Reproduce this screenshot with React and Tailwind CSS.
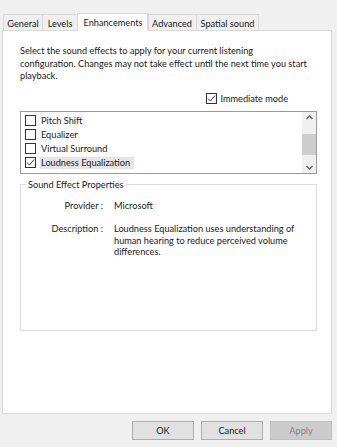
import React from "react";

const tabs = [
  { label: "General", w: "w-[40px]" },
  { label: "Levels", w: "w-[36px]" },
  { label: "Enhancements", w: "w-[72px]", active: true },
  { label: "Advanced", w: "w-[50px]" },
  { label: "Spatial sound", w: "w-[63px]" },
];

const effects = [
  { label: "Pitch Shift" },
  { label: "Equalizer" },
  { label: "Virtual Surround" },
  { label: "Loudness Equalization", checked: true, selected: true },
];

function Check({ checked }) {
  return (
    <span className="w-[11px] h-[11px] border border-[#333] bg-white flex items-center justify-center shrink-0">
      {checked && (
        <svg width="9" height="9" viewBox="0 0 9 9">
          <polyline points="1,4.5 3.5,7 8,1.5" fill="none" stroke="#333" strokeWidth="1" />
        </svg>
      )}
    </span>
  );
}

export default function App() {
  return (
    <div className="w-[337px] h-[447px] bg-[#f0f0f0] flex flex-col font-['Lato',sans-serif] text-[9.2px] text-[#1a1a1a] overflow-hidden">
      {/* tab strip */}
      <div className="flex items-end pl-[3px] pt-[13px] h-[31px] relative z-10">
        {tabs.map((t) =>
          t.active ? (
            <div
              key={t.label}
              className={`${t.w} h-[18px] -mx-[1px] bg-white border border-b-0 border-[#d9d9d9] flex items-start justify-center pt-[2px]`}
            >
              {t.label}
            </div>
          ) : (
            <div
              key={t.label}
              className={`${t.w} h-[16px] mb-[1px] border border-b-0 border-[#d9d9d9] -ml-[1px] first:ml-0 flex items-center justify-center pt-[2px]`}
            >
              {t.label}
            </div>
          )
        )}
      </div>

      {/* page */}
      <div className="ml-[2px] w-[330px] h-[384px] -mt-[1px] bg-white border border-[#d9d9d9] pl-[17px] pr-[14px] pt-[14px]">
        <p className="leading-[12.5px] -mr-[8px] whitespace-nowrap">
          Select the sound effects to apply for your current listening
          <br />
          configuration. Changes may not take effect until the next time you start
          <br />
          playback.
        </p>

        <div className="flex justify-end items-center gap-[3px] mt-[10px] pr-[29px] h-[12px]">
          <Check checked />
          <span>Immediate mode</span>
        </div>

        {/* effects list */}
        <div className="mt-[6px] h-[63px] border border-[#9a9a9a] flex">
          <div className="flex-1 pl-[4px] pt-[2px]">
            {effects.map((e) => (
              <div key={e.label} className="h-[14px] flex items-center gap-[4px]">
                <Check checked={e.checked} />
                <span className={`px-[1px] leading-[12px] ${e.selected ? "bg-[#e5e5e5] pr-[4px]" : ""}`}>{e.label}</span>
              </div>
            ))}
          </div>
          <div className="w-[14px] bg-[#f0f0f0] flex flex-col items-center justify-between py-[3px]">
            <svg width="7" height="5" viewBox="0 0 7 5">
              <polyline points="0.5,4 3.5,1 6.5,4" fill="none" stroke="#606060" strokeWidth="1.3" />
            </svg>
            <div className="w-[14px] h-[21px] bg-[#cdcdcd] mt-[6px]" />
            <svg width="7" height="5" viewBox="0 0 7 5" className="mt-[2px]">
              <polyline points="0.5,1 3.5,4 6.5,1" fill="none" stroke="#606060" strokeWidth="1.3" />
            </svg>
          </div>
        </div>

        {/* properties group */}
        <fieldset className="mt-[5px] h-[152px] border border-[#dcdcdc]">
          <legend className="ml-[5px] px-[2px] leading-[12px]">Sound Effect Properties</legend>
          <div className="grid grid-cols-[82px_1fr] gap-x-[11px] gap-y-[12px] mt-[9px] leading-[11.5px]">
            <span className="text-right">Provider :</span>
            <span>Microsoft</span>
            <span className="text-right">Description :</span>
            <span className="w-[190px]">
              Loudness Equalization uses understanding of human hearing to reduce perceived volume differences.
            </span>
          </div>
        </fieldset>
      </div>

      {/* buttons */}
      <div className="flex justify-end gap-[7px] pr-[5px] mt-[7px]">
        <button className="w-[62px] h-[19px] bg-[#e1e1e1] border border-[#adadad] text-[9.2px]">OK</button>
        <button className="w-[62px] h-[19px] bg-[#e1e1e1] border border-[#adadad] text-[9.2px]">Cancel</button>
        <button className="w-[62px] h-[19px] bg-[#cccccc] border border-[#bfbfbf] text-[#838383] text-[9.2px]">Apply</button>
      </div>
    </div>
  );
}
